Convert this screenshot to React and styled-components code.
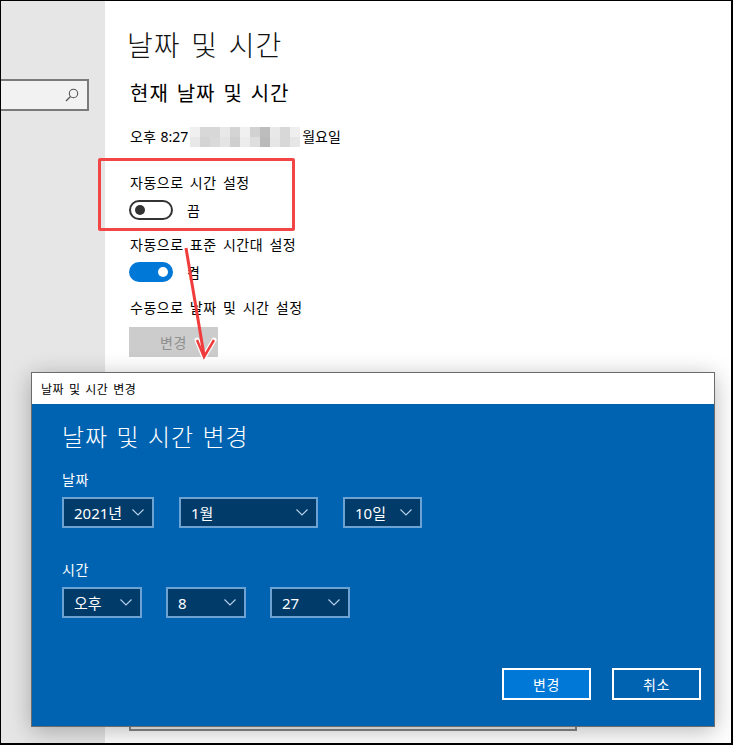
import React from "react";
import styled, { createGlobalStyle } from "styled-components";

const Global = createGlobalStyle`
  html, body { margin: 0; padding: 0; background: #ffffff; }
  body { font-family: "Noto Sans", "Noto Sans CJK KR", sans-serif; }
  * { box-sizing: border-box; }
`;

const Frame = styled.div`
  position: relative;
  width: 733px;
  height: 745px;
  border-style: solid;
  border-color: #000;
  border-width: 1px 2px 2px 1px;
  display: flex;
  overflow: hidden;
  background: #fff;
`;

const Sidebar = styled.aside`
  width: 104px;
  flex: none;
  background: #e6e6e6;
  padding-top: 78px;
`;

const SearchBox = styled.div`
  width: 88px;
  height: 32px;
  background: #f2f2f2;
  border: 2px solid #7a7a7a;
  border-left: none;
  display: flex;
  align-items: center;
  justify-content: flex-end;
  padding-right: 8px;
  color: #555;
`;

const Main = styled.main`
  flex: 1;
  padding: 26px 0 0 23px;
  display: flex;
  flex-direction: column;
  align-items: flex-start;
  color: #000;
`;

const PageTitle = styled.h1`
  margin: 0 0 0 -1px;
  font-size: 28px;
  line-height: 36px;
  font-weight: 300;
  color: #111;
  letter-spacing: 1px;
  word-spacing: 2.5px;
`;

const SectionTitle = styled.h2`
  margin: 17px 0 0 2px;
  font-size: 20px;
  line-height: 28px;
  font-weight: 400;
  letter-spacing: 1px;
  word-spacing: 1.7px;
`;

const Line = styled.div`
  margin-top: ${(p) => p.$mt || 0}px;
  margin-left: 2px;
  font-size: 14px;
  line-height: 20px;
  display: flex;
  align-items: center;
  letter-spacing: ${(p) => (p.$tight ? 0 : 0.5)}px;
  word-spacing: ${(p) => (p.$tight ? 1 : 2.2)}px;
`;

const Blur = styled.div`
  display: grid;
  grid-template-columns: repeat(11, 10px);
  grid-auto-rows: 10px;
  margin: 0 2px 0 2px;
`;

const Tile = styled.span`
  background: ${(p) => p.$c};
`;

const ToggleRow = styled.div`
  display: flex;
  align-items: center;
  gap: 14px;
  margin: 7px 0 0 1px;
  font-size: 14px;
`;

const Toggle = styled.div`
  width: 44px;
  height: 20px;
  border-radius: 10px;
  display: flex;
  align-items: center;
  padding: 0 ${(p) => (p.$on ? 5 : 4)}px;
  justify-content: ${(p) => (p.$on ? "flex-end" : "flex-start")};
  background: ${(p) => (p.$on ? "#0078d7" : "transparent")};
  border: ${(p) => (p.$on ? "none" : "2px solid #333")};
`;

const Knob = styled.span`
  width: 10px;
  height: 10px;
  border-radius: 50%;
  background: ${(p) => (p.$on ? "#fff" : "#333")};
`;

const GrayButton = styled.div`
  margin: 9px 0 0 1px;
  width: 89px;
  height: 30px;
  background: #cccccc;
  color: #8f8f8f;
  font-size: 14px;
  letter-spacing: 0.5px;
  display: flex;
  align-items: center;
  justify-content: center;
`;

const BehindField = styled.div`
  margin: 342px 0 0 1px;
  width: 448px;
  height: 32px;
  border: 2px solid #888;
  background: #f2f2f2;
`;

const Highlight = styled.div`
  position: absolute;
  left: 97px;
  top: 157px;
  width: 197px;
  height: 73px;
  border: 3px solid #f24646;
  border-radius: 2px;
`;

const ArrowSvg = styled.svg`
  position: absolute;
  left: 175px;
  top: 240px;
`;

const Dialog = styled.div`
  position: absolute;
  left: 30px;
  top: 371px;
  width: 684px;
  height: 355px;
  border: 1px solid #6b6b6b;
  background: #0063b1;
  box-shadow: 0 4px 22px rgba(0, 0, 0, 0.28);
  display: flex;
  flex-direction: column;
`;

const TitleBar = styled.div`
  height: 31px;
  background: #fff;
  color: #000;
  font-size: 12px;
  letter-spacing: 0.4px;
  word-spacing: 1.5px;
  display: flex;
  align-items: center;
  padding-left: 9px;
`;

const DialogBody = styled.div`
  flex: 1;
  display: flex;
  flex-direction: column;
  padding: 17px 12px 26px 30px;
  color: #fff;
`;

const DialogHeading = styled.div`
  font-size: 24px;
  line-height: 32px;
  font-weight: 300;
  letter-spacing: 0.8px;
  word-spacing: 1.7px;
`;

const FieldLabel = styled.div`
  margin-top: ${(p) => p.$mt}px;
  font-size: 14px;
  line-height: 20px;
  letter-spacing: 0.6px;
`;

const SelectRow = styled.div`
  display: flex;
  gap: ${(p) => p.$gap}px;
  margin-top: 7px;
`;

const Select = styled.div`
  width: ${(p) => p.$w}px;
  height: 31px;
  background: #003b6a;
  border: 2px solid #6da3d2;
  display: flex;
  align-items: center;
  justify-content: space-between;
  padding: 0 8px 0 10px;
  font-size: 15px;
  color: #fff;
`;

const Footer = styled.div`
  margin-top: auto;
  display: flex;
  justify-content: flex-end;
  gap: 21px;
  padding-right: 1px;
`;

const DialogButton = styled.div`
  width: 89px;
  height: 32px;
  border: 2px solid #fff;
  background: ${(p) => (p.$primary ? "#0078d7" : "transparent")};
  color: #fff;
  font-size: 14px;
  letter-spacing: 0.6px;
  display: flex;
  align-items: center;
  justify-content: center;
`;

const Chevron = () => (
  <svg width="12" height="7" viewBox="0 0 12 7">
    <polyline points="0.5,0.5 6,6 11.5,0.5" fill="none" stroke="#b9d1e8" strokeWidth="1.1" />
  </svg>
);

const SearchIcon = () => (
  <svg width="14" height="14" viewBox="0 0 14 14">
    <circle cx="8.5" cy="5.5" r="4.2" fill="none" stroke="#555" strokeWidth="1.1" />
    <line x1="5.5" y1="8.5" x2="1" y2="13" stroke="#555" strokeWidth="1.3" />
  </svg>
);

const top = ["#f0f0f0", "#d8d8d8", "#d8d8d8", "#e8e8e8", "#d4d4d4", "#f0f0f0", "#d2d2d2", "#bdbdbd", "#e8e8e8", "#d8d8d8", "#efefef"];
const bottom = ["#e8e8e8", "#d4d4d4", "#dadada", "#e4e4e4", "#cfcfcf", "#ececec", "#dedede", "#bababa", "#e6e6e6", "#d8d8d8", "#e6e6e6"];

const Sel = ({ w, children }) => (
  <Select $w={w}>
    <span>{children}</span>
    <Chevron />
  </Select>
);

export default function App() {
  return (
    <>
      <Global />
      <Frame>
        <Sidebar>
          <SearchBox>
            <SearchIcon />
          </SearchBox>
        </Sidebar>
        <Main>
          <PageTitle>날짜 및 시간</PageTitle>
          <SectionTitle>현재 날짜 및 시간</SectionTitle>
          <Line $mt={19} $tight>
            오후 8:27
            <Blur>
              {top.concat(bottom).map((c, i) => (
                <Tile key={i} $c={c} />
              ))}
            </Blur>
            월요일
          </Line>
          <Line $mt={26}>자동으로 시간 설정</Line>
          <ToggleRow>
            <Toggle>
              <Knob />
            </Toggle>
            끔
          </ToggleRow>
          <Line $mt={15}>자동으로 표준 시간대 설정</Line>
          <ToggleRow>
            <Toggle $on>
              <Knob $on />
            </Toggle>
            켬
          </ToggleRow>
          <Line $mt={16}>수동으로 날짜 및 시간 설정</Line>
          <GrayButton>변경</GrayButton>
          <BehindField />
        </Main>

        <Highlight />
        <ArrowSvg width="50" height="125" viewBox="0 0 50 125">
          <path d="M21 99 L28 116 L38 99" stroke="#fff" strokeWidth="5" strokeLinecap="round" strokeLinejoin="round" fill="none" />
          <line x1="10" y1="7" x2="28" y2="114" stroke="#f03c3c" strokeWidth="3" />
          <path d="M21 99 L28 116 L38 99" stroke="#f03c3c" strokeWidth="2.5" strokeLinejoin="miter" fill="none" />
        </ArrowSvg>

        <Dialog>
          <TitleBar>날짜 및 시간 변경</TitleBar>
          <DialogBody>
            <DialogHeading>날짜 및 시간 변경</DialogHeading>
            <FieldLabel $mt={17}>날짜</FieldLabel>
            <SelectRow $gap={25}>
              <Sel w={92}>2021년</Sel>
              <Sel w={139}>1월</Sel>
              <Sel w={79}>10일</Sel>
            </SelectRow>
            <FieldLabel $mt={32}>시간</FieldLabel>
            <SelectRow $gap={24}>
              <Sel w={80}>오후</Sel>
              <Sel w={80}>8</Sel>
              <Sel w={80}>27</Sel>
            </SelectRow>
            <Footer>
              <DialogButton $primary>변경</DialogButton>
              <DialogButton>취소</DialogButton>
            </Footer>
          </DialogBody>
        </Dialog>
      </Frame>
    </>
  );
}
